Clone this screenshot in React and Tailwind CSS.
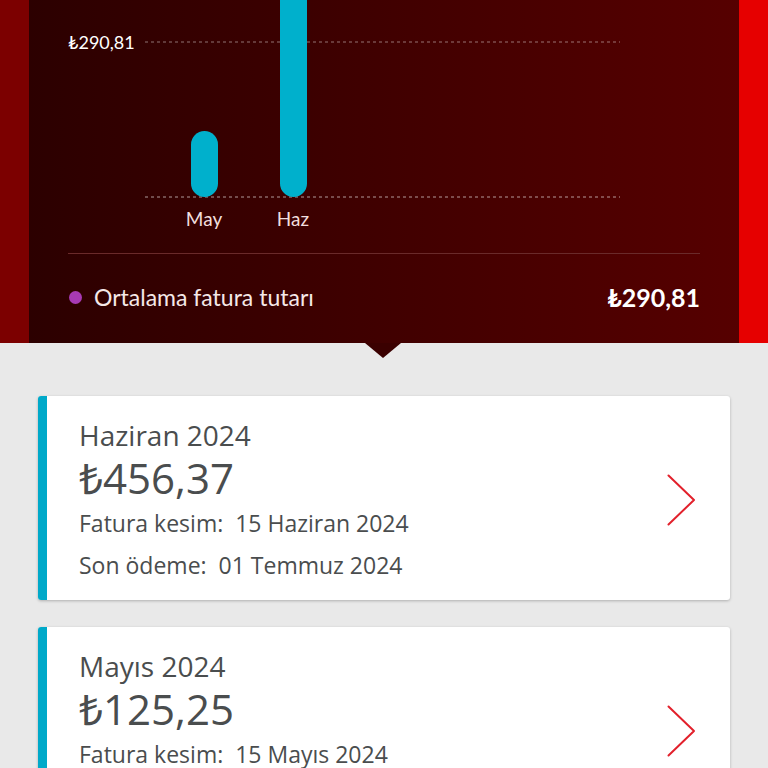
import React from "react";

const BILLS = [
  { title: "Haziran 2024", amount: "₺456,37", cut: "15 Haziran 2024", due: "01 Temmuz 2024" },
  { title: "Mayıs 2024", amount: "₺125,25", cut: "15 Mayıs 2024", due: "01 Haziran 2024" },
];

function Chart() {
  return (
    <svg width="632" height="235" viewBox="0 0 632 235" className="block">
      <text x="0" y="49" fill="#ffffff" fontSize="18" fontFamily="Lato, sans-serif">₺290,81</text>
      <line x1="77" y1="42" x2="552" y2="42" stroke="rgba(255,255,255,0.45)" strokeWidth="1" strokeDasharray="3 3" />
      <line x1="77" y1="197" x2="552" y2="197" stroke="rgba(255,255,255,0.6)" strokeWidth="1" strokeDasharray="3 3" />
      <rect x="123" y="131" width="27" height="66" rx="13.5" fill="#00b0cc" />
      <rect x="212" y="-30" width="27" height="227" rx="13.5" fill="#00b0cc" />
      <text x="136" y="226" textAnchor="middle" fill="#f1dede" fontSize="19" fontFamily="Lato, sans-serif">May</text>
      <text x="225" y="226" textAnchor="middle" fill="#f1dede" fontSize="19" fontFamily="Lato, sans-serif">Haz</text>
    </svg>
  );
}

function Chevron() {
  return (
    <svg width="29" height="52" viewBox="0 0 29 52" fill="none" className="mb-[4px]">
      <path d="M1.5 1.5 L27 26 L1.5 50.5" stroke="#e2212c" strokeWidth="2" strokeLinecap="round" strokeLinejoin="round" />
    </svg>
  );
}

function BillCard({ bill }) {
  return (
    <div className="flex bg-white rounded-[3px] shadow-[0_1px_3px_rgba(0,0,0,0.25)] overflow-hidden">
      <div className="w-[9px] bg-[#00a9c9] shrink-0" />
      <div className="flex-1 flex items-center justify-between pl-[32px] pr-[34px] pt-[21px] pb-[14px]">
        <div className="text-[#4a4d4e]">
          <div className="text-[28px] leading-[36px]">{bill.title}</div>
          <div className="text-[42px] leading-[49px]">{bill.amount}</div>
          <div className="text-[23px] leading-[42px]">Fatura kesim:&nbsp; {bill.cut}</div>
          <div className="text-[23px] leading-[42px]">Son ödeme:&nbsp; {bill.due}</div>
        </div>
        <Chevron />
      </div>
    </div>
  );
}

export default function App() {
  return (
    <div className="w-[768px] h-[768px] overflow-hidden bg-[#e9e9e9]" style={{ fontFamily: "'Open Sans', sans-serif" }}>
      <div className="flex h-[343px]">
        <div className="w-[29px] bg-[#7c0000]" />
        <div className="flex-1 bg-gradient-to-r from-[#2c0000] to-[#560000] pl-[39px] pr-[39px] flex flex-col" style={{ fontFamily: "Lato, sans-serif" }}>
          <Chart />
          <div className="mt-[18px] h-px bg-[#6a2a2a]" />
          <div className="flex-1 flex items-center justify-between pb-[2px]">
            <div className="flex items-center">
              <span className="w-[13px] h-[13px] rounded-full bg-[#a83ab4] ml-[1px] mr-[12px]" />
              <span className="text-[23px] text-[#f5e8e8]">Ortalama fatura tutarı</span>
            </div>
            <span className="text-[25px] font-bold text-white">₺290,81</span>
          </div>
        </div>
        <div className="w-[29px] bg-[#e60000]" />
      </div>
      <div className="relative">
        <div className="absolute left-[365px] top-0 w-0 h-0 border-l-[18px] border-r-[18px] border-t-[15px] border-l-transparent border-r-transparent border-t-[#3a0000]" />
        <div className="px-[38px] pt-[53px] flex flex-col gap-[27px]">
          {BILLS.map((b) => (
            <BillCard key={b.title} bill={b} />
          ))}
        </div>
      </div>
    </div>
  );
}
